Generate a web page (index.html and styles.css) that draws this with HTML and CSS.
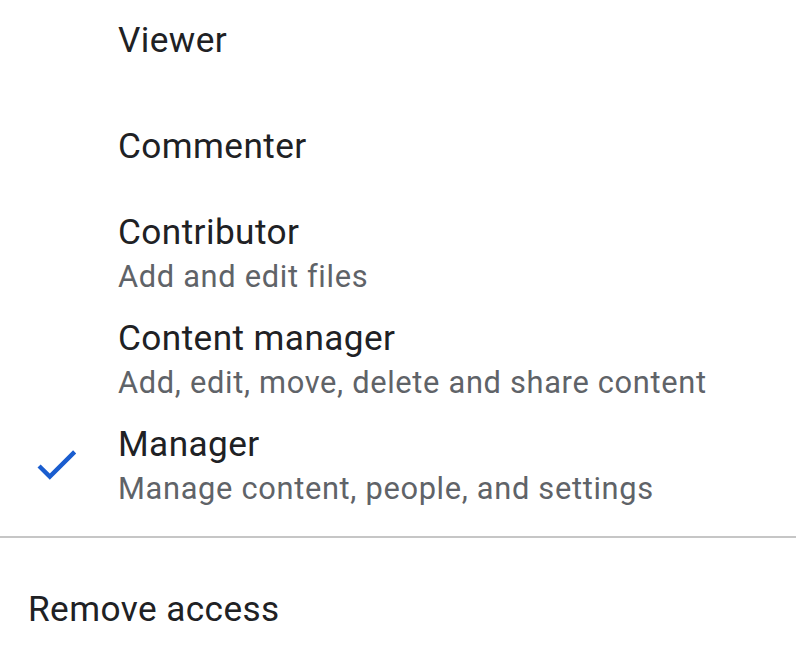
FILE: index.html
```html
<!DOCTYPE html>
<html lang="en">
<head>
<meta charset="utf-8">
<title>Access menu</title>
<link rel="stylesheet" href="styles.css">
</head>
<body>
<div class="menu">
  <ul class="roles">
    <li class="item">
      <span class="icon"></span>
      <div class="text"><div class="title">Viewer</div></div>
    </li>
    <li class="item">
      <span class="icon"></span>
      <div class="text"><div class="title">Commenter</div></div>
    </li>
    <li class="item">
      <span class="icon"></span>
      <div class="text"><div class="title">Contributor</div><div class="sub">Add and edit files</div></div>
    </li>
    <li class="item">
      <span class="icon"></span>
      <div class="text"><div class="title">Content manager</div><div class="sub">Add, edit, move, delete and share content</div></div>
    </li>
    <li class="item selected">
      <span class="icon">
        <svg viewBox="0 0 24 24" width="52.8" height="52.8"><path d="M9 16.17L4.83 12l-1.42 1.41L9 19 21 7l-1.41-1.41z" fill="#1a5dcf"/></svg>
      </span>
      <div class="text"><div class="title">Manager</div><div class="sub">Manage content, people, and settings</div></div>
    </li>
  </ul>
  <hr class="divider">
  <div class="item remove">
    <div class="text"><div class="title">Remove access</div></div>
  </div>
</div>
</body>
</html>
```

FILE: styles.css
```css
html, body {
  margin: 0;
  padding: 0;
  background: #ffffff;
}

body {
  font-family: Roboto, "Noto Sans", Arial, sans-serif;
  color: #202124;
  overflow: hidden;
}

.menu {
  margin-top: -13px;
}

.roles {
  list-style: none;
  margin: 0;
  padding: 0;
}

.item {
  display: flex;
  align-items: center;
  min-height: 106px;
  box-sizing: border-box;
  padding: 8px 0 8px 29.5px;
}

.icon {
  flex: none;
  width: 52.8px;
  height: 52.8px;
  margin-right: 35.7px;
  display: flex;
  align-items: center;
  justify-content: center;
}

.icon svg {
  display: block;
}

.text {
  display: flex;
  flex-direction: column;
}

.title {
  font-size: 35.2px;
  line-height: 50px;
  letter-spacing: 0.42px;
  color: #202124;
  white-space: nowrap;
}

.sub {
  font-size: 30.8px;
  line-height: 40px;
  letter-spacing: 0.68px;
  color: #5f6368;
  white-space: nowrap;
}

.divider {
  border: 0;
  height: 2px;
  background: #c6c6c6;
  margin: 19px 0 0 0;
}

.remove {
  margin-top: 18px;
  padding-left: 28px;
}
```
